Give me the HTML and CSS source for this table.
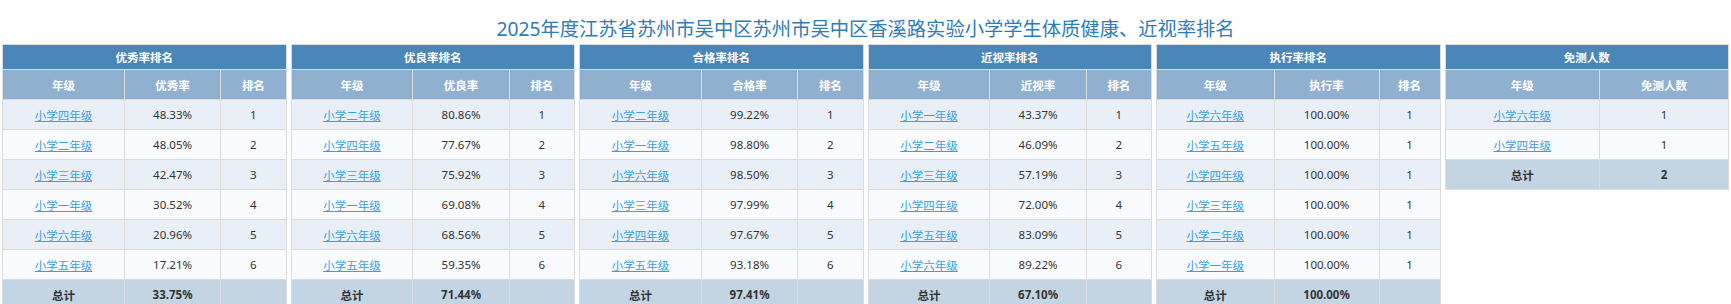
FILE: index.html
```html
<!DOCTYPE html>
<html lang="zh-CN">
<head>
<meta charset="utf-8">
<title>排名</title>
<link rel="stylesheet" href="styles.css">
</head>
<body>
<h1 class="title">2025年度江苏省苏州市吴中区苏州市吴中区香溪路实验小学学生体质健康、近视率排名</h1>
<div class="boards">
  <table class="rank">
    <colgroup><col class="c-a"><col class="c-b"><col class="c-c"></colgroup>
    <tr class="cap"><th colspan="3">优秀率排名</th></tr>
    <tr class="sub"><th>年级</th><th>优秀率</th><th>排名</th></tr>
    <tr class="odd"><td><a href="#">小学四年级</a></td><td>48.33%</td><td>1</td></tr>
    <tr class="even"><td><a href="#">小学二年级</a></td><td>48.05%</td><td>2</td></tr>
    <tr class="odd"><td><a href="#">小学三年级</a></td><td>42.47%</td><td>3</td></tr>
    <tr class="even"><td><a href="#">小学一年级</a></td><td>30.52%</td><td>4</td></tr>
    <tr class="odd"><td><a href="#">小学六年级</a></td><td>20.96%</td><td>5</td></tr>
    <tr class="even"><td><a href="#">小学五年级</a></td><td>17.21%</td><td>6</td></tr>
    <tr class="total"><td>总计</td><td>33.75%</td><td></td></tr>
  </table>
  <table class="rank">
    <colgroup><col class="c-a"><col class="c-b"><col class="c-c"></colgroup>
    <tr class="cap"><th colspan="3">优良率排名</th></tr>
    <tr class="sub"><th>年级</th><th>优良率</th><th>排名</th></tr>
    <tr class="odd"><td><a href="#">小学二年级</a></td><td>80.86%</td><td>1</td></tr>
    <tr class="even"><td><a href="#">小学四年级</a></td><td>77.67%</td><td>2</td></tr>
    <tr class="odd"><td><a href="#">小学三年级</a></td><td>75.92%</td><td>3</td></tr>
    <tr class="even"><td><a href="#">小学一年级</a></td><td>69.08%</td><td>4</td></tr>
    <tr class="odd"><td><a href="#">小学六年级</a></td><td>68.56%</td><td>5</td></tr>
    <tr class="even"><td><a href="#">小学五年级</a></td><td>59.35%</td><td>6</td></tr>
    <tr class="total"><td>总计</td><td>71.44%</td><td></td></tr>
  </table>
  <table class="rank">
    <colgroup><col class="c-a"><col class="c-b"><col class="c-c"></colgroup>
    <tr class="cap"><th colspan="3">合格率排名</th></tr>
    <tr class="sub"><th>年级</th><th>合格率</th><th>排名</th></tr>
    <tr class="odd"><td><a href="#">小学二年级</a></td><td>99.22%</td><td>1</td></tr>
    <tr class="even"><td><a href="#">小学一年级</a></td><td>98.80%</td><td>2</td></tr>
    <tr class="odd"><td><a href="#">小学六年级</a></td><td>98.50%</td><td>3</td></tr>
    <tr class="even"><td><a href="#">小学三年级</a></td><td>97.99%</td><td>4</td></tr>
    <tr class="odd"><td><a href="#">小学四年级</a></td><td>97.67%</td><td>5</td></tr>
    <tr class="even"><td><a href="#">小学五年级</a></td><td>93.18%</td><td>6</td></tr>
    <tr class="total"><td>总计</td><td>97.41%</td><td></td></tr>
  </table>
  <table class="rank">
    <colgroup><col class="c-a"><col class="c-b"><col class="c-c"></colgroup>
    <tr class="cap"><th colspan="3">近视率排名</th></tr>
    <tr class="sub"><th>年级</th><th>近视率</th><th>排名</th></tr>
    <tr class="odd"><td><a href="#">小学一年级</a></td><td>43.37%</td><td>1</td></tr>
    <tr class="even"><td><a href="#">小学二年级</a></td><td>46.09%</td><td>2</td></tr>
    <tr class="odd"><td><a href="#">小学三年级</a></td><td>57.19%</td><td>3</td></tr>
    <tr class="even"><td><a href="#">小学四年级</a></td><td>72.00%</td><td>4</td></tr>
    <tr class="odd"><td><a href="#">小学五年级</a></td><td>83.09%</td><td>5</td></tr>
    <tr class="even"><td><a href="#">小学六年级</a></td><td>89.22%</td><td>6</td></tr>
    <tr class="total"><td>总计</td><td>67.10%</td><td></td></tr>
  </table>
  <table class="rank">
    <colgroup><col class="d-a"><col class="d-b"><col class="d-c"></colgroup>
    <tr class="cap"><th colspan="3">执行率排名</th></tr>
    <tr class="sub"><th>年级</th><th>执行率</th><th>排名</th></tr>
    <tr class="odd"><td><a href="#">小学六年级</a></td><td>100.00%</td><td>1</td></tr>
    <tr class="even"><td><a href="#">小学五年级</a></td><td>100.00%</td><td>1</td></tr>
    <tr class="odd"><td><a href="#">小学四年级</a></td><td>100.00%</td><td>1</td></tr>
    <tr class="even"><td><a href="#">小学三年级</a></td><td>100.00%</td><td>1</td></tr>
    <tr class="odd"><td><a href="#">小学二年级</a></td><td>100.00%</td><td>1</td></tr>
    <tr class="even"><td><a href="#">小学一年级</a></td><td>100.00%</td><td>1</td></tr>
    <tr class="total"><td>总计</td><td>100.00%</td><td></td></tr>
  </table>
  <table class="rank">
    <colgroup><col class="e-a"><col class="e-b"></colgroup>
    <tr class="cap"><th colspan="2">免测人数</th></tr>
    <tr class="sub"><th>年级</th><th>免测人数</th></tr>
    <tr class="odd"><td><a href="#">小学六年级</a></td><td>1</td></tr>
    <tr class="even"><td><a href="#">小学四年级</a></td><td>1</td></tr>
    <tr class="total"><td>总计</td><td>2</td></tr>
  </table>
</div>
</body>
</html>
```
FILE: styles.css
```css
html, body {
  margin: 0;
  padding: 0;
  background: #ffffff;
}

body {
  font-family: "Noto Sans", "Noto Sans CJK SC", sans-serif;
  color: #333333;
}

.title {
  margin: 0;
  padding-top: 15px;
  height: 27px;
  line-height: 27px;
  font-size: 19.3px;
  font-weight: normal;
  text-align: center;
  color: #2f7cb6;
  font-family: "Noto Sans", "Noto Sans CJK SC", sans-serif;
}

.boards {
  margin-top: 2px;
  padding: 0 2px;
  display: grid;
  grid-template-columns: repeat(6, 1fr);
  column-gap: 4px;
  align-items: start;
}

.rank {
  width: 100%;
  border-collapse: collapse;
  table-layout: fixed;
  border: 1px solid #dcdcdc;
  font-size: 11.5px;
}

.c-a { width: 43%; }
.c-b { width: 34%; }
.c-c { width: 23%; }
.d-a { width: 41.5%; }
.d-b { width: 37%; }
.d-c { width: 21.5%; }
.e-a { width: 54.5%; }
.e-b { width: 45.5%; }

.rank th,
.rank td {
  border: 1px solid #dcdcdc;
  text-align: center;
  padding: 0;
}

.cap th {
  height: 24px;
  background: #4a86b8;
  color: #ffffff;
  font-weight: bold;
  font-size: 11.5px;
}

.sub th {
  height: 29px;
  background: #8fb1cf;
  color: #ffffff;
  font-weight: bold;
  font-size: 11.5px;
}

.rank td {
  height: 29px;
}

.odd td { background: #e8eff6; }
.even td { background: #f9fbfe; }

.total td {
  background: #c3d5e3;
  font-weight: bold;
  color: #333333;
}

.rank a {
  color: #3a9ee4;
  text-decoration: underline;
}
```
